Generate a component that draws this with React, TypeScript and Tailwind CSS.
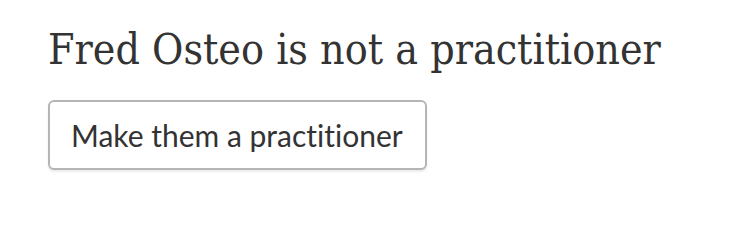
import React from 'react';

export default function App() {
  return (
    <div className="min-h-[218px] bg-white pl-[48px] pt-[22px]">
      <h1 className="font-['DejaVu_Serif_Condensed','DejaVu_Serif',serif] text-[42.5px] leading-[56px] font-normal text-[#333333] [font-stretch:condensed]">
        Fred Osteo is not a practitioner
      </h1>
      <button
        type="button"
        className="mt-[22px] h-[70px] w-[379px] rounded-[6px] border-2 border-[#b5b5b5] bg-white pl-[21px] text-left font-['Lato','Noto_Sans',sans-serif] text-[30px] text-[#333333] shadow-[0_2px_2px_rgba(0,0,0,0.08)] [font-variant-ligatures:none]"
      >
        Make them a practitioner
      </button>
    </div>
  );
}
